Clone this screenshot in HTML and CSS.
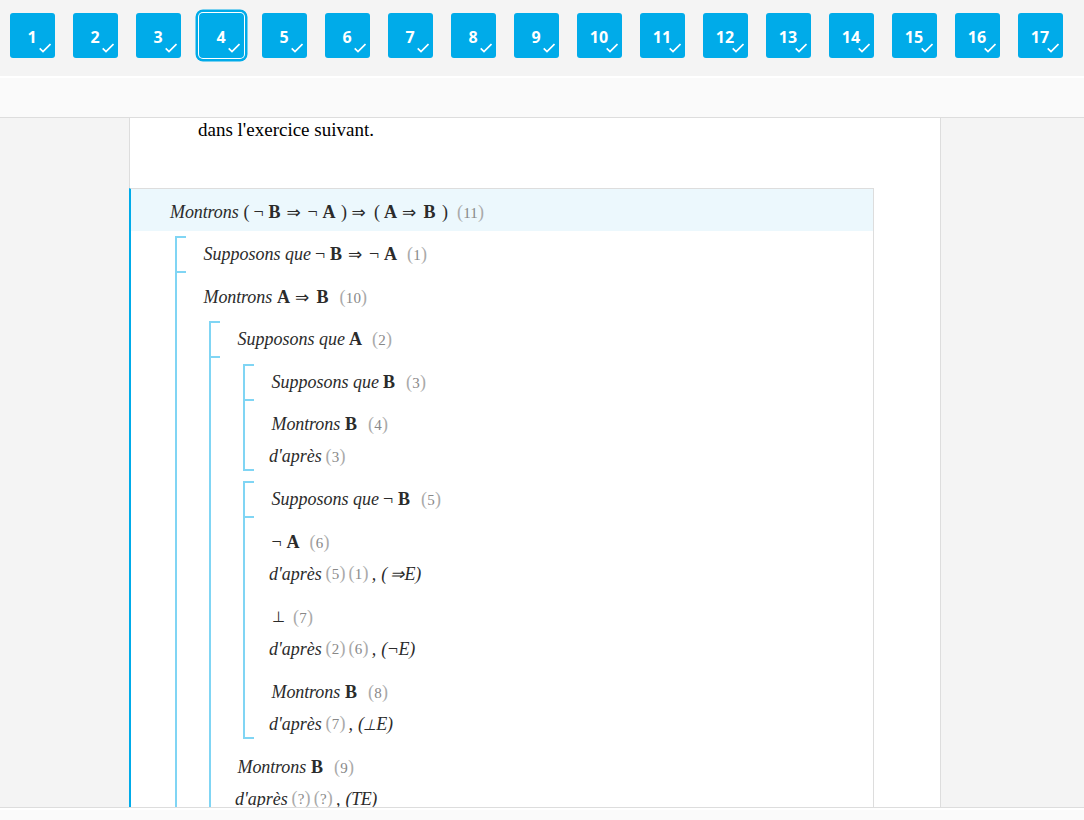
FILE: index.html
```html
<!DOCTYPE html>
<html lang="fr">
<head>
<meta charset="utf-8">
<title>Exercice 4</title>
<link rel="stylesheet" href="styles.css">
</head>
<body>
<nav class="steps" id="steps"></nav>
<div class="toolbar"></div>
<main class="stage">
  <article class="page">
    <p class="intro">dans l'exercice suivant.</p>
    <section class="proof">
      <div class="row goal"><i class="mon">Montrons</i><span class="par">(</span><span class="neg">¬</span><b>B</b><span class="imp">⇒</span><span class="neg">¬</span><b>A</b><span class="par close">)</span><span class="imp wide">⇒</span><span class="par">(</span><b>A</b><span class="imp">⇒</span><b>B</b><span class="par close">)</span><span class="ref">11</span></div>
      <div class="group">
        <div class="row assume"><i class="sup">Supposons que</i><span class="neg">¬</span><b>B</b><span class="imp">⇒</span><span class="neg">¬</span><b>A</b><span class="ref">1</span></div>
        <div class="row"><i class="mon">Montrons</i><b>A</b><span class="imp">⇒</span><b>B</b><span class="ref">10</span></div>
        <div class="group">
          <div class="row assume"><i class="sup">Supposons que</i><b>A</b><span class="ref">2</span></div>
          <div class="group closed">
            <div class="row assume"><i class="sup">Supposons que</i><b>B</b><span class="ref">3</span></div>
            <div class="row"><i class="mon">Montrons</i><b>B</b><span class="ref">4</span></div>
            <div class="just"><i class="dap">d'après</i><span class="ref">3</span></div>
          </div>
          <div class="group closed">
            <div class="row assume"><i class="sup">Supposons que</i><span class="neg">¬</span><b>B</b><span class="ref">5</span></div>
            <div class="row"><span class="neg">¬</span><b>A</b><span class="ref">6</span></div>
            <div class="just"><i class="dap">d'après</i><span class="ref">5</span><span class="ref">1</span><i class="comma">,</i><i class="rule">( <span class="slant">⇒</span>E)</i></div>
            <div class="row"><span class="bot">⊥</span><span class="ref">7</span></div>
            <div class="just"><i class="dap">d'après</i><span class="ref">2</span><span class="ref">6</span><i class="comma">,</i><i class="rule">(¬E)</i></div>
            <div class="row"><i class="mon">Montrons</i><b>B</b><span class="ref">8</span></div>
            <div class="just"><i class="dap">d'après</i><span class="ref">7</span><i class="comma">,</i><i class="rule">(<span class="perp">⊥</span>E)</i></div>
          </div>
          <div class="row"><i class="mon">Montrons</i><b>B</b><span class="ref">9</span></div>
          <div class="just"><i class="dap">d'après</i><span class="ref">?</span><span class="ref">?</span><i class="comma">,</i><i class="rule">(TE)</i></div>
        </div>
      </div>
    </section>
  </article>
</main>
<footer class="bottom"></footer>
<script src="steps.js"></script>
</body>
</html>
```
FILE: steps.js
```js
const nav = document.getElementById('steps');
for (let n = 1; n <= 17; n++) {
  const step = document.createElement('a');
  step.className = n === 4 ? 'step current' : 'step';
  step.innerHTML = `<span>${n}</span><svg class="check" viewBox="0 0 12 10"><path d="M.7 5.3 4 8.5 11.5 1" fill="none" stroke="#fff" stroke-width="1.7"/></svg>`;
  nav.append(step);
}
```
FILE: styles.css
```css
* { box-sizing: border-box; }
body {
  margin: 0;
  height: 820px;
  overflow: hidden;
  display: flex;
  flex-direction: column;
  background: #f4f4f4;
  font-family: "Liberation Serif", serif;
}
.steps {
  flex: 0 0 76px;
  display: flex;
  gap: 18px;
  padding: 13px 10px 0;
}
.step {
  position: relative;
  flex: 0 0 45px;
  height: 45px;
  padding-right: 1px;
  border-radius: 3px;
  background: #00abe9;
  color: #fff;
  font: bold 16px/48px "Open Sans", sans-serif;
  text-align: center;
}
.current { box-shadow: 0 0 0 1px #fff, 0 0 0 3px #00abe9, 0 0 0 3.5px #00abe9; border-radius: 4px; }
.check { position: absolute; right: 4px; bottom: 5px; width: 12px; height: 10px; }
.toolbar {
  flex: 0 0 42px;
  background: #fafafa;
  border-top: 2px solid #fff;
  border-bottom: 1px solid #ddd;
}
.stage { flex: 0 0 689px; overflow: hidden; }
.bottom {
  flex: 0 0 13px;
  border-top: 1px solid #ddd;
  background: #fafafa;
  box-shadow: inset 0 2px #fff;
}
.page {
  width: 812px;
  height: 689px;
  margin-left: 129px;
  padding-right: 66px;
  background: #fff;
  border-right: 1px solid #ddd;
  overflow: hidden;
}
.intro {
  height: 70px;
  margin: 0;
  padding-left: 68px;
  border-left: 1px solid #ddd;
  font-size: 19px;
  line-height: 24px;
}
.proof {
  height: 760px;
  border: 1px solid #ddd;
  border-left: 2px solid #00abe9;
  color: #2b2b2b;
  font-size: 18px;
}
.row, .just { display: flex; align-items: center; white-space: nowrap; line-height: 28px; }
.row { height: 37px; margin-top: 5.5px; padding: 0 0 1px 26.5px; }
.just { height: 28px; padding: 0 0 2px 24px; }
.just + .row, .group + .row { margin-top: 10px; }
.proof > .goal { height: 42px; margin: 0; padding: 4px 0 0 39px; background: #ecf8fd; }
.group {
  margin: 5.5px 0 0 32px;
  border-left: 2px solid #80d5f4;
}
.goal + .group { margin: 5px 0 0 44px; }
.group > .assume {
  margin-top: 0;
  background: linear-gradient(#80d5f4, #80d5f4) 0 0 / 9px 2px no-repeat,
    linear-gradient(#80d5f4, #80d5f4) 0 100% / 9px 2px no-repeat;
}
.closed { background: linear-gradient(#80d5f4, #80d5f4) 0 100% / 9px 2px no-repeat; }
.closed + .closed { margin-top: 10px; }
.mon { width: 73.5px; letter-spacing: -.1px; }
.sup { width: 111.5px; }
.dap { width: 56.5px; }
.row b { width: 13px; margin-right: 5.5px; }
.par { width: 10px; }
.row .close { width: 10.5px; }
.neg { width: 15px; }
.imp { width: 21px; margin-left: -.5px; font-family: "DejaVu Sans", sans-serif; font-size: 17px; }
.wide { width: 22.5px; margin-left: 0; }
.imp + b { margin-left: .5px; }
.bot { width: 17px; font-size: 15px; }
.ref {
  position: relative;
  color: #888;
  font-size: 15px;
  letter-spacing: .2px;
}
.ref::before, .ref::after { content: "("; color: #aaa; font-size: 18px; }
.ref::after { content: ")"; }
.row .ref { top: .5px; margin-left: 4.5px; }
.row .bot + .ref { margin-left: 4.5px; }
.just .ref { margin-right: 3px; }
.comma { width: 9.5px; }
.rule { letter-spacing: -.4px; }
.slant, .perp { display: inline-block; font-style: normal; line-height: 1; transform: skewX(-14deg); }
.slant { font-size: 17px; }
.perp { font-size: 15px; }
```
